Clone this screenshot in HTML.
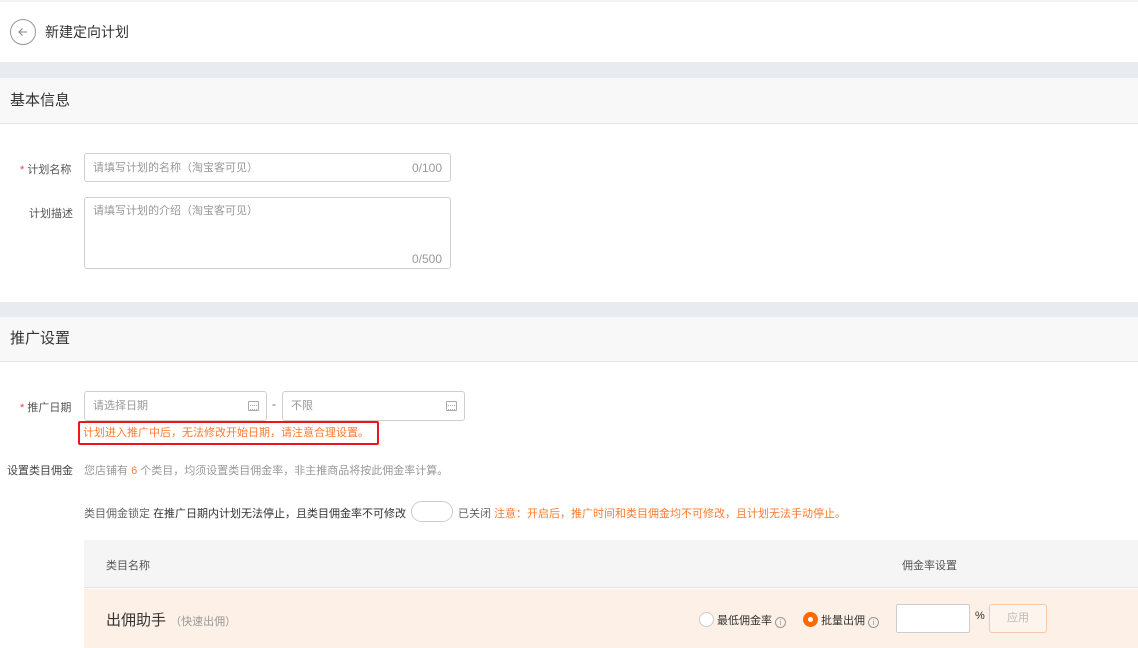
<!DOCTYPE html>
<html><head><meta charset="utf-8"><style>
*{margin:0;padding:0;box-sizing:border-box}
body{width:1138px;height:648px;overflow:hidden;background:#fff;font-family:"Liberation Sans","Noto Sans CJK SC",sans-serif;color:#333;position:relative}
.a{position:absolute;white-space:nowrap}
.band{position:absolute;left:0;width:1138px;background:#e8ecf1}
.hdr{position:absolute;left:0;width:1138px;background:#f8f8f8;border-bottom:1px solid #e6e6e6;font-size:15px;color:#333;padding-left:10px}
.inp{position:absolute;border:1px solid #cfcfcf;border-radius:3px;background:#fff;font-size:11px;color:#999}
.lbl{font-size:11px;color:#555}
.star{color:#e44}
.cal{position:absolute;width:11px;height:10px;border:1px solid #aaa;border-radius:1px;top:9px}
.cal:after{content:"";position:absolute;left:1px;right:1px;top:3px;height:3px;border-top:1px dotted #aaa;border-bottom:1px dotted #aaa}
</style></head><body>
<div class="a" style="left:0;top:0;width:1138px;height:2px;background:#f0f2f5"></div>
<div class="a" style="left:10px;top:19px;width:26px;height:26px;border:1px solid #999;border-radius:50%"></div>
<svg class="a" style="left:16px;top:25px" width="14" height="14" viewBox="0 0 14 14"><path d="M11 7H3M6.5 3.5L3 7l3.5 3.5" stroke="#888" stroke-width="1.1" fill="none"/></svg>
<div class="a" style="left:45px;top:22px;font-size:14px;color:#333">新建定向计划</div>

<div class="band" style="top:62px;height:16px"></div>
<div class="hdr" style="top:78px;height:46px;line-height:45px">基本信息</div>
<div class="a lbl" style="left:20px;top:161px"><span class="star">* </span>计划名称</div>
<div class="inp" style="left:84px;top:153px;width:367px;height:29px;line-height:28px;padding:0 8px">请填写计划的名称（淘宝客可见）<span style="float:right;font-size:12px">0/100</span></div>
<div class="a lbl" style="left:29px;top:205px">计划描述</div>
<div class="inp" style="left:84px;top:197px;width:367px;height:72px;padding:4px 8px">请填写计划的介绍（淘宝客可见）<span style="position:absolute;right:8px;bottom:2px;font-size:12px">0/500</span></div>

<div class="band" style="top:302px;height:15px"></div>
<div class="hdr" style="top:317px;height:45px;line-height:44px">推广设置</div>

<div class="a lbl" style="left:20px;top:399px"><span class="star">* </span>推广日期</div>
<div class="inp" style="left:84px;top:391px;width:183px;height:30px;line-height:29px;padding:0 8px">请选择日期<div class="cal" style="right:7px"></div></div>
<div class="a" style="left:272px;top:397px;font-size:12px;color:#666">-</div>
<div class="inp" style="left:282px;top:391px;width:183px;height:30px;line-height:29px;padding:0 8px">不限<div class="cal" style="right:7px"></div></div>
<div class="a" style="left:78px;top:421px;width:301px;height:24px;border:2px solid #f0131b;border-radius:2px"></div>
<div class="a" style="left:83px;top:424px;font-size:11px;color:#ff7a2e">计划进入推广中后，无法修改开始日期，请注意合理设置。</div>

<div class="a" style="left:7px;top:462px;font-size:11px;color:#444">设置类目佣金</div>
<div class="a" style="left:84px;top:462px;font-size:11px;color:#999">您店铺有 <span style="color:#ff7a2e">6</span> 个类目，均须设置类目佣金率，非主推商品将按此佣金率计算。</div>

<div class="a" style="left:84px;top:505px;font-size:11px;color:#666">类目佣金锁定 <span style="color:#333">在推广日期内计划无法停止，且类目佣金率不可修改</span></div>
<div class="a" style="left:411px;top:501px;width:42px;height:21px;border:1px solid #ccc;border-radius:11px;background:#fff"></div>
<div class="a" style="left:458px;top:505px;font-size:11px;color:#666">已关闭 <span style="color:#ff7a2e">注意：开启后，推广时间和类目佣金均不可修改，且计划无法手动停止。</span></div>

<div class="a" style="left:84px;top:540px;width:1054px;height:48px;background:#f5f5f6;border-bottom:1px solid #e6e6ea"></div>
<div class="a" style="left:106px;top:557px;font-size:11px;color:#555">类目名称</div>
<div class="a" style="left:902px;top:557px;font-size:11px;color:#555">佣金率设置</div>
<div class="a" style="left:84px;top:589px;width:1054px;height:59px;background:#fdf0e6"></div>
<div class="a" style="left:106px;top:609px;font-size:15px;color:#333">出佣助手 <span style="font-size:11px;color:#999">（快速出佣）</span></div>
<div class="a" style="left:699px;top:612px;width:15px;height:15px;border:1px solid #ccc;border-radius:50%;background:#fff"></div>
<div class="a" style="left:717px;top:612px;font-size:11px;color:#333">最低佣金率 <span style="display:inline-block;width:11px;height:11px;border:1px solid #999;border-radius:50%;font-size:8px;line-height:9px;text-align:center;color:#999;vertical-align:-1px">i</span></div>
<div class="a" style="left:803px;top:612px;width:15px;height:15px;border-radius:50%;background:#ff6a00"><div style="position:absolute;left:5px;top:5px;width:5px;height:5px;border-radius:50%;background:#fff"></div></div>
<div class="a" style="left:821px;top:612px;font-size:11px;color:#333">批量出佣 <span style="display:inline-block;width:11px;height:11px;border:1px solid #999;border-radius:50%;font-size:8px;line-height:9px;text-align:center;color:#999;vertical-align:-1px">i</span></div>
<div class="a" style="left:896px;top:604px;width:74px;height:29px;border:1px solid #ccc;border-radius:2px;background:#fff"></div>
<div class="a" style="left:975px;top:610px;font-size:11px;color:#333">%</div>
<div class="a" style="left:989px;top:604px;width:58px;height:29px;border:1px solid #f5c9a8;border-radius:3px;background:#fdf4ee;font-size:11px;color:#bbb;text-align:center;line-height:27px">应用</div>
</body></html>
